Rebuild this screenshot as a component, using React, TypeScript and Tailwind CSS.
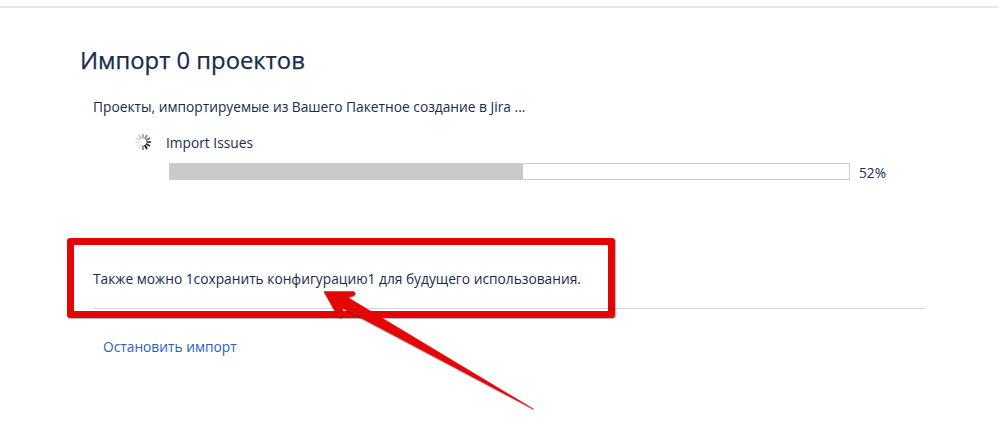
import React from 'react';

const Spinner: React.FC = () => {
  const shades = ['#111', '#2a2a2a', '#444', '#666', '#888', '#aaa', '#c4c4c4', '#d6d6d6', '#e4e4e4', '#ececec', '#e0e0e0', '#888'];
  return (
    <svg width="18" height="18" viewBox="0 0 18 18" className="shrink-0">
      {shades.map((c, i) => (
        <line
          key={i}
          x1="9"
          y1="1"
          x2="9"
          y2="5.5"
          stroke={c}
          strokeWidth="1.8"
          transform={`rotate(${150 - i * 30} 9 9)`}
        />
      ))}
    </svg>
  );
};

const App: React.FC = () => {
  return (
    <div className="relative h-[433px] w-[999px] overflow-hidden bg-white font-['Open_Sans','Noto_Sans',sans-serif] text-[#172b4d]">
      <div className="h-[8px] border-b-2 border-[#e8e8e8]" />

      <div className="pl-[80px] pr-[73px]">
        <h1 className="mt-[34px] text-[23.8px] leading-[36px] font-medium text-[#172b4d] [-webkit-text-stroke:0.25px_#172b4d]">Импорт 0 проектов</h1>

        <div className="pl-[13px]">
          <p className="mt-[19px] text-[13.75px] leading-[20px]">Проекты, импортируемые из Вашего Пакетное создание в Jira ...</p>

          <div className="mt-[16px] flex items-center pl-[41px]">
            <div className="-mt-[3px]">
              <Spinner />
            </div>
            <span className="ml-[14px] text-[13.75px] leading-[20px]">Import Issues</span>
          </div>

          <div className="mt-[10px] flex items-start pl-[76px]">
            <div className="h-[17px] w-[681px] border border-[#cccccc]">
              <div className="h-full w-[52%] bg-[#cacaca]" />
            </div>
            <span className="ml-[9px] text-[13.75px] leading-[20px]">52%</span>
          </div>

          <p className="mt-[86px] text-[13.75px] leading-[20px]">Также можно 1сохранить конфигурацию1 для будущего использования.</p>

          <div className="mt-[19px] border-t border-[#d4d4d4]" />

          <a href="#" className="mt-[28px] ml-[10px] block text-[13.75px] leading-[20px] text-[#2a5fc4]">Остановить импорт</a>
        </div>
      </div>

      {/* red annotation frame */}
      <div className="absolute left-[67px] top-[238px] h-[80px] w-[548px] rounded-[3px] border-[7px] border-[#e60505] shadow-[1px_1px_1px_rgba(0,0,0,0.3)]" />

      {/* red annotation arrow */}
      <svg className="absolute inset-0 drop-shadow-[0.5px_1px_0.5px_rgba(0,0,0,0.35)]" width="999" height="433" viewBox="0 0 999 433">
        <path
          d="M324 291.5 L354 291.5 Q356.5 293.5 354 295.5 L348 297.5 L533.5 409 L342.5 308 L343.5 316 Q341 319 338 316.5 Z"
          fill="#e60505"
          stroke="#e60505"
          strokeWidth="0.5"
          strokeLinejoin="round"
        />
      </svg>
    </div>
  );
};

export default App;
